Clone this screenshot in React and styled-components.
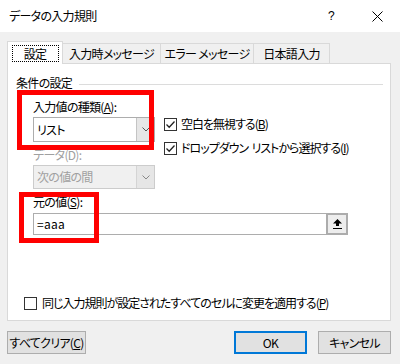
import React from 'react';
import styled, { createGlobalStyle } from 'styled-components';

const GlobalStyle = createGlobalStyle`
  html, body {
    margin: 0;
    padding: 0;
    background: #f0f0f0;
  }

  body {
    font-family: "Noto Sans CJK JP", "Noto Sans", sans-serif;
    font-size: 12px;
    color: #000;
    font-feature-settings: "palt";
    letter-spacing: -0.7px;
  }
`;

const Dialog = styled.div`
  position: relative;
  width: 400px;
  height: 364px;
  background: #f0f0f0;
  display: flex;
  flex-direction: column;
  overflow: hidden;
`;

const TitleBar = styled.div`
  height: 32px;
  flex-shrink: 0;
  background: #fff;
  display: flex;
  align-items: center;
  padding-left: 9px;
`;

const Title = styled.div`
  flex: 1;
  line-height: 16px;
  margin-top: -1px;
`;

const TitleButton = styled.div`
  width: 46px;
  height: 32px;
  display: flex;
  align-items: center;
  justify-content: center;
  font-family: "Liberation Sans", sans-serif;
  font-size: 12px;
`;

const Body = styled.div`
  flex: 1;
  display: flex;
  flex-direction: column;
  padding: 9px 9px 0 7px;
`;

const TabRow = styled.div`
  display: flex;
  align-items: flex-end;
  height: 22px;
`;

const Tab = styled.div`
  position: relative;
  box-sizing: border-box;
  width: ${({ $width }) => $width}px;
  height: ${({ $active }) => ($active ? 23 : 20)}px;
  margin-bottom: ${({ $active }) => ($active ? -1 : 0)}px;
  margin-left: ${({ $first }) => ($first ? 0 : -1)}px;
  z-index: ${({ $active }) => ($active ? 2 : 1)};
  background: ${({ $active }) => ($active ? '#fff' : '#f0f0f0')};
  border: 1px solid #d9d9d9;
  border-bottom: none;
  display: flex;
  align-items: center;
  justify-content: center;
  line-height: 16px;
  white-space: nowrap;
`;

const FocusLabel = styled.span`
  box-sizing: border-box;
  width: 47px;
  height: 17px;
  margin-top: 1px;
  border: 1px dotted #000;
  display: flex;
  align-items: center;
  justify-content: center;
`;

const Panel = styled.div`
  box-sizing: border-box;
  width: 384px;
  height: 258px;
  background: #fff;
  border: 1px solid #d9d9d9;
  display: flex;
  flex-direction: column;
  padding: 11px 0 9px 8px;
`;

const GroupHeader = styled.div`
  display: flex;
  align-items: center;
  gap: 7px;
  line-height: 16px;
  padding-right: 7px;

  &::after {
    content: '';
    flex: 1;
    height: 1px;
    margin-top: 2px;
    background: #dcdcdc;
  }
`;

const Fields = styled.div`
  display: grid;
  grid-template-columns: 122px auto;
  column-gap: 9px;
  padding-left: 17px;
  margin-top: 8px;
  justify-content: start;
`;

const FieldLabel = styled.div`
  grid-column: 1;
  line-height: 16px;
  margin-top: ${({ $gap }) => $gap || 0}px;
  color: ${({ $disabled }) => ($disabled ? '#a0a0a0' : '#000')};
  white-space: nowrap;
`;

const Select = styled.div`
  grid-column: 1;
  box-sizing: border-box;
  height: ${({ $height }) => $height}px;
  margin-top: 2px;
  display: flex;
  border: 1px solid ${({ $disabled }) => ($disabled ? '#cccccc' : '#adadad')};
  background: ${({ $disabled }) => ($disabled ? '#f0f0f0' : '#fff')};
  color: ${({ $disabled }) => ($disabled ? '#a0a0a0' : '#000')};
`;

const SelectValue = styled.div`
  flex: 1;
  display: flex;
  align-items: center;
  padding-left: 3px;
  line-height: 16px;
`;

const SelectButton = styled.div`
  width: 17px;
  display: flex;
  align-items: center;
  justify-content: center;
  background: #e6e6e6;
  border-left: 1px solid ${({ $disabled }) => ($disabled ? '#d4d4d4' : '#c4c4c4')};
`;

const CheckRow = styled.label`
  grid-column: ${({ $column }) => $column || 2};
  grid-row: ${({ $row }) => $row || 'auto'};
  align-self: start;
  margin-top: ${({ $offset }) => $offset || 0}px;
  display: flex;
  align-items: center;
  gap: 4px;
  height: 16px;
  line-height: 16px;
  letter-spacing: -1px;
  white-space: pre;
`;

const Box = styled.span`
  box-sizing: border-box;
  width: 13px;
  height: 13px;
  border: 1px solid #333;
  background: #fff;
  display: flex;
  align-items: center;
  justify-content: center;
  flex-shrink: 0;
`;

const SourceInput = styled.div`
  grid-column: 1 / span 2;
  box-sizing: border-box;
  width: 315px;
  height: 22px;
  margin-top: 3px;
  display: flex;
  border: 1px solid #adadad;
`;

const InputText = styled.div`
  flex: 1;
  display: flex;
  align-items: center;
  padding-left: 3px;
  line-height: 16px;
  letter-spacing: 0.3px;
`;

const CollapseButton = styled.div`
  box-sizing: border-box;
  width: 22px;
  margin: -1px -1px -1px 0;
  border: 2px solid #acacac;
  background: #ededed;
  display: flex;
  align-items: center;
  justify-content: center;
`;

const BottomCheck = styled.label`
  margin-top: auto;
  display: flex;
  align-items: center;
  gap: 5px;
  height: 16px;
  line-height: 16px;
  padding-left: 8px;
  letter-spacing: -1px;
  white-space: nowrap;
`;

const Footer = styled.div`
  display: flex;
  align-items: center;
  margin-top: 10px;
`;

const Button = styled.div`
  box-sizing: border-box;
  width: ${({ $width }) => $width}px;
  height: 23px;
  margin-left: ${({ $gap }) => $gap || 0}px;
  background: #e1e1e1;
  border: ${({ $primary }) => ($primary ? '2px solid #0078d7' : '1px solid #adadad')};
  display: flex;
  align-items: center;
  justify-content: center;
  line-height: 16px;
  white-space: nowrap;
`;

const Spacer = styled.div`
  flex: 1;
`;

const Annotation = styled.div`
  position: absolute;
  box-sizing: border-box;
  left: ${({ $x }) => $x}px;
  top: ${({ $y }) => $y}px;
  width: ${({ $w }) => $w}px;
  height: ${({ $h }) => $h}px;
  border: 5px solid #ff0000;
  pointer-events: none;
`;

function Chevron({ color = '#555' }) {
  return (
    <svg width="8" height="5" viewBox="0 0 8 5">
      <path d="M0.5 0.5 L4 4 L7.5 0.5" fill="none" stroke={color} strokeWidth="1" />
    </svg>
  );
}

function Check() {
  return (
    <svg width="11" height="11" viewBox="0 0 11 11">
      <path d="M1.5 5.5 L4.2 8.2 L9.5 2.5" fill="none" stroke="#222" strokeWidth="1.3" />
    </svg>
  );
}

function CloseGlyph() {
  return (
    <svg width="11" height="11" viewBox="0 0 11 11">
      <path d="M0.5 0.5 L10.5 10.5 M10.5 0.5 L0.5 10.5" stroke="#000" strokeWidth="1" />
    </svg>
  );
}

function UpArrow() {
  return (
    <svg width="9" height="10" viewBox="0 0 9 10">
      <path d="M4.5 0 L9 4.5 L6 4.5 L6 7 L3 7 L3 4.5 L0 4.5 Z" fill="#000" />
      <rect x="0" y="9" width="9" height="1" fill="#000" />
    </svg>
  );
}

export default function App() {
  return (
    <>
      <GlobalStyle />
      <Dialog>
        <TitleBar>
          <Title>データの入力規則</Title>
          <TitleButton>?</TitleButton>
          <TitleButton>
            <CloseGlyph />
          </TitleButton>
        </TitleBar>
        <Body>
          <TabRow>
            <Tab $active $first $width={56}>
              <FocusLabel>設定</FocusLabel>
            </Tab>
            <Tab $width={99}>入力時メッセージ</Tab>
            <Tab $width={94}>エラー メッセージ</Tab>
            <Tab $width={77}>日本語入力</Tab>
          </TabRow>
          <Panel>
            <GroupHeader>条件の設定</GroupHeader>
            <Fields>
              <FieldLabel>
                入力値の種類(<u>A</u>):
              </FieldLabel>
              <Select $height={25}>
                <SelectValue>リスト</SelectValue>
                <SelectButton>
                  <Chevron />
                </SelectButton>
              </Select>
              <CheckRow $row={2} $offset={1}>
                <Box>
                  <Check />
                </Box>
                <span>
                  空白を無視する(<u>B</u>)
                </span>
              </CheckRow>
              <FieldLabel $disabled $gap={5}>
                データ(D):
              </FieldLabel>
              <CheckRow $row={3} $offset={-2}>
                <Box>
                  <Check />
                </Box>
                <span>
                  ドロップダウン{'  '}リストから選択する(<u>I</u>)
                </span>
              </CheckRow>
              <Select $disabled $height={24}>
                <SelectValue>次の値の間</SelectValue>
                <SelectButton $disabled>
                  <Chevron color="#888" />
                </SelectButton>
              </Select>
              <FieldLabel $gap={5}>
                元の値(<u>S</u>):
              </FieldLabel>
              <SourceInput>
                <InputText>=aaa</InputText>
                <CollapseButton>
                  <UpArrow />
                </CollapseButton>
              </SourceInput>
            </Fields>
            <BottomCheck>
              <Box />
              <span>
                同じ入力規則が設定されたすべてのセルに変更を適用する(<u>P</u>)
              </span>
            </BottomCheck>
          </Panel>
          <Footer>
            <Button $width={79}>
              <span>
                すべてクリア(<u>C</u>)
              </span>
            </Button>
            <Spacer />
            <Button $primary $width={73}>
              OK
            </Button>
            <Button $width={73} $gap={11}>
              キャンセル
            </Button>
          </Footer>
        </Body>
        <Annotation $x={17} $y={90} $w={137} $h={60} />
        <Annotation $x={19} $y={192} $w={80} $h={51} />
      </Dialog>
    </>
  );
}
